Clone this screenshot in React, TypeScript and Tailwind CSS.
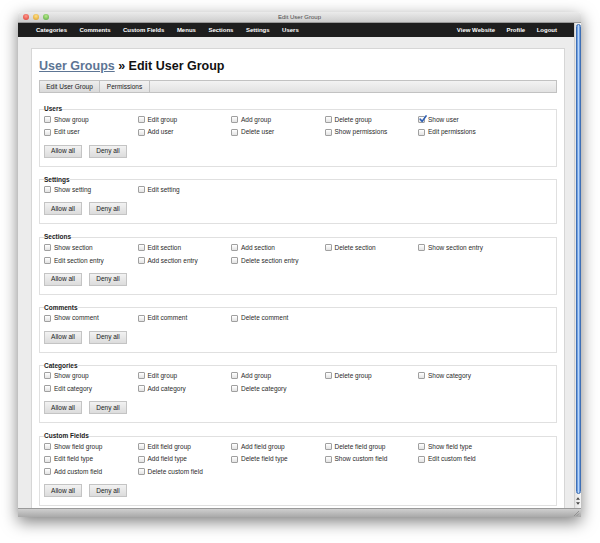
import React from 'react';

type Perm = { label: string; checked?: boolean };
type Group = { title: string; perms: Perm[] };

const groups: Group[] = [
  {
    title: 'Users',
    perms: [
      { label: 'Show group' },
      { label: 'Edit group' },
      { label: 'Add group' },
      { label: 'Delete group' },
      { label: 'Show user', checked: true },
      { label: 'Edit user' },
      { label: 'Add user' },
      { label: 'Delete user' },
      { label: 'Show permissions' },
      { label: 'Edit permissions' },
    ],
  },
  {
    title: 'Settings',
    perms: [{ label: 'Show setting' }, { label: 'Edit setting' }],
  },
  {
    title: 'Sections',
    perms: [
      { label: 'Show section' },
      { label: 'Edit section' },
      { label: 'Add section' },
      { label: 'Delete section' },
      { label: 'Show section entry' },
      { label: 'Edit section entry' },
      { label: 'Add section entry' },
      { label: 'Delete section entry' },
    ],
  },
  {
    title: 'Comments',
    perms: [{ label: 'Show comment' }, { label: 'Edit comment' }, { label: 'Delete comment' }],
  },
  {
    title: 'Categories',
    perms: [
      { label: 'Show group' },
      { label: 'Edit group' },
      { label: 'Add group' },
      { label: 'Delete group' },
      { label: 'Show category' },
      { label: 'Edit category' },
      { label: 'Add category' },
      { label: 'Delete category' },
    ],
  },
  {
    title: 'Custom Fields',
    perms: [
      { label: 'Show field group' },
      { label: 'Edit field group' },
      { label: 'Add field group' },
      { label: 'Delete field group' },
      { label: 'Show field type' },
      { label: 'Edit field type' },
      { label: 'Add field type' },
      { label: 'Delete field type' },
      { label: 'Show custom field' },
      { label: 'Edit custom field' },
      { label: 'Add custom field' },
      { label: 'Delete custom field' },
    ],
  },
];

const leftNav = ['Categories', 'Comments', 'Custom Fields', 'Menus', 'Sections', 'Settings', 'Users'];
const rightNav = ['View Website', 'Profile', 'Logout'];

function Checkbox({ checked }: { checked?: boolean }) {
  return (
    <span className="relative w-[7px] h-[7px] shrink-0 rounded-[1px] border border-[#a0a0a0] bg-gradient-to-b from-white to-[#e3e3e3]">
      {checked && (
        <svg viewBox="0 0 10 10" className="absolute -top-[2px] left-0 w-[8px] h-[8px]">
          <path d="M1.5 5.2 L4 8 L8.8 1.2" fill="none" stroke="#2f5fb3" strokeWidth="2" strokeLinecap="round" strokeLinejoin="round" />
        </svg>
      )}
    </span>
  );
}

function SmallButton({ children }: { children: React.ReactNode }) {
  return (
    <button className="w-[38px] h-[13px] flex items-center justify-center border border-[#c4c4c4] bg-gradient-to-b from-[#f2f2f2] to-[#dcdcdc] text-[6.5px] text-[#1a1a1a]">
      {children}
    </button>
  );
}

function PermissionSet({ group, first }: { group: Group; first?: boolean }) {
  return (
    <fieldset className={`border border-[#e0e0e0] px-[4px] pb-[8px] ${first ? 'mt-[12px]' : 'mt-[9px]'}`}>
      <legend className="text-[6.5px] leading-[8px] font-bold text-[#1a1a1a] px-0">{group.title}</legend>
      <div className="grid grid-cols-[repeat(5,93.5px)] auto-rows-[12.75px]">
        {group.perms.map((p, i) => (
          <label key={i} className="flex items-center gap-[3px] text-[6.5px] text-[#2a2a2a] whitespace-nowrap">
            <Checkbox checked={p.checked} />
            <span>{p.label}</span>
          </label>
        ))}
      </div>
      <div className="mt-[6px] flex gap-[7px]">
        <SmallButton>Allow all</SmallButton>
        <SmallButton>Deny all</SmallButton>
      </div>
    </fieldset>
  );
}

export default function App() {
  return (
    <div className="w-[600px] h-[543px] bg-white pt-[12px] pl-[18px] overflow-hidden font-['Liberation_Sans',Arial,sans-serif]">
      <div className="w-[563px] h-[505px] flex flex-col rounded-t-[3px] shadow-[0_5px_16px_rgba(0,0,0,0.5)] overflow-hidden">
        {/* title bar */}
        <div className="h-[11px] shrink-0 relative flex items-center justify-center bg-gradient-to-b from-[#ebebeb] to-[#cdcdcd] border-b border-[#9a9a9a]">
          <div className="absolute left-[5px] top-[2px] flex gap-[4px]">
            <span className="w-[6px] h-[6px] rounded-full bg-[radial-gradient(circle_at_50%_35%,#ff9a8f,#d9362b)]" />
            <span className="w-[6px] h-[6px] rounded-full bg-[radial-gradient(circle_at_50%_35%,#ffe08a,#d99a1c)]" />
            <span className="w-[6px] h-[6px] rounded-full bg-[radial-gradient(circle_at_50%_35%,#b9ea8d,#4fa33a)]" />
          </div>
          <span className="text-[6px] leading-none text-[#4a4a4a]">Edit User Group</span>
        </div>

        <div className="flex flex-1 min-h-0">
          {/* viewport */}
          <div className="flex-1 min-w-0 bg-[#ececec] flex flex-col overflow-hidden">
            <nav className="h-[14px] shrink-0 bg-[#1e1e1e] flex items-center justify-between pl-[18px] pr-[17px]">
              <ul className="flex gap-[12.5px]">
                {leftNav.map((n) => (
                  <li key={n} className="text-[6px] font-bold text-white whitespace-nowrap">{n}</li>
                ))}
              </ul>
              <ul className="flex gap-[11.5px]">
                {rightNav.map((n) => (
                  <li key={n} className="text-[6px] font-bold text-white whitespace-nowrap">{n}</li>
                ))}
              </ul>
            </nav>

            <div className="pt-[11px] pl-[13px] pr-[9px]">
              <div className="bg-white border border-[#d6d6d6] px-[7px] pt-[10px] pb-[20px]">
                <h1 className="text-[12.5px] leading-[15px] font-bold text-[#111]">
                  <a className="text-[#5d7594] underline decoration-1 underline-offset-[1px]">User Groups</a> » Edit User Group
                </h1>

                <div className="mt-[6px] h-[13px] flex border border-[#c2c2c2] bg-gradient-to-b from-[#f3f3f3] to-[#e2e2e2]">
                  <div className="w-[60px] flex items-center justify-center border-r border-[#c2c2c2] bg-gradient-to-b from-[#eeeeee] to-[#dadada] text-[6.5px] text-[#1a1a1a]">
                    Edit User Group
                  </div>
                  <div className="w-[50px] flex items-center justify-center border-r border-[#c2c2c2] text-[6.5px] text-[#1a1a1a]">
                    Permissions
                  </div>
                </div>

                {groups.map((g, i) => (
                  <PermissionSet key={g.title} group={g} first={i === 0} />
                ))}
              </div>
            </div>
          </div>

          {/* scrollbar */}
          <div className="w-[7px] shrink-0 bg-gradient-to-r from-[#e4e4e4] to-[#f6f6f6] border-l border-[#cfcfcf] flex flex-col items-center">
            <div className="mt-[1px] w-[5px] flex-1 rounded-full bg-gradient-to-r from-[#4f86d6] via-[#b9d6f8] to-[#4f86d6] border border-[#3e6fb5]" />
            <div className="h-[14px] flex flex-col items-center justify-center gap-[2px]">
              <svg viewBox="0 0 6 4" className="w-[4px] h-[3px]"><path d="M0 4 L3 0 L6 4Z" fill="#444" /></svg>
              <svg viewBox="0 0 6 4" className="w-[4px] h-[3px]"><path d="M0 0 L3 4 L6 0Z" fill="#444" /></svg>
            </div>
          </div>
        </div>

        {/* bottom bar */}
        <div className="h-[9px] shrink-0 bg-gradient-to-b from-[#cfcfcf] to-[#a9a9a9] border-t border-[#9a9a9a] flex justify-end items-end">
          <svg viewBox="0 0 8 8" className="w-[8px] h-[8px] mr-[1px]">
            <path d="M7 2 L2 7 M7 4.5 L4.5 7" stroke="#888" strokeWidth="0.8" />
          </svg>
        </div>
      </div>
    </div>
  );
}
